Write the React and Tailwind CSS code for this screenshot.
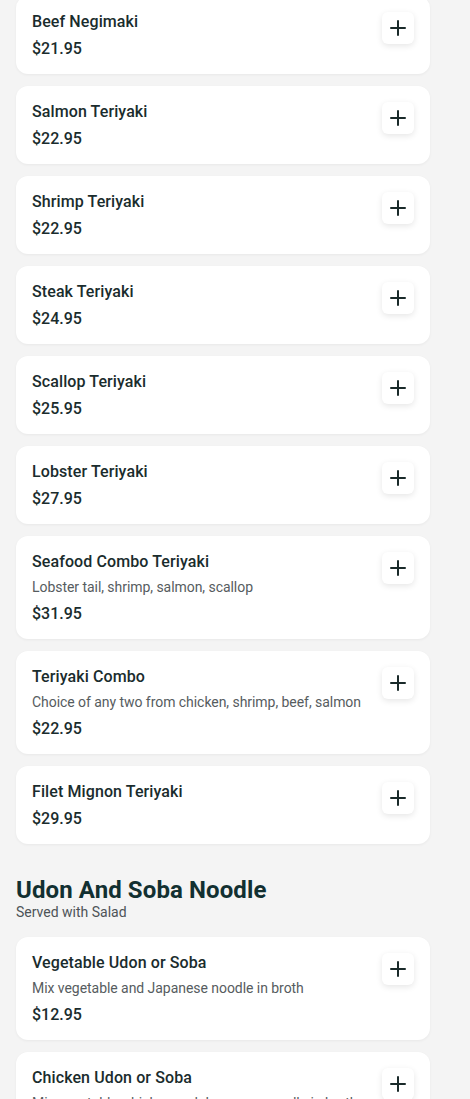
import React from "react";
import { Plus } from "lucide-react";

const teriyaki = [
  { name: "Beef Negimaki", price: "$21.95" },
  { name: "Salmon Teriyaki", price: "$22.95" },
  { name: "Shrimp Teriyaki", price: "$22.95" },
  { name: "Steak Teriyaki", price: "$24.95" },
  { name: "Scallop Teriyaki", price: "$25.95" },
  { name: "Lobster Teriyaki", price: "$27.95" },
  { name: "Seafood Combo Teriyaki", desc: "Lobster tail, shrimp, salmon, scallop", price: "$31.95" },
  { name: "Teriyaki Combo", desc: "Choice of any two from chicken, shrimp, beef, salmon", price: "$22.95" },
  { name: "Filet Mignon Teriyaki", price: "$29.95" },
];

const noodles = [
  { name: "Vegetable Udon or Soba", desc: "Mix vegetable and Japanese noodle in broth", price: "$12.95" },
  { name: "Chicken Udon or Soba", desc: "Mix vegetable, chicken and Japanese noodle in broth", price: "$13.95" },
];

function Item({ item }) {
  return (
    <div className="flex items-start justify-between rounded-xl bg-white p-4 shadow-[0_1px_3px_rgba(0,0,0,0.05)]">
      <div className="flex flex-col gap-2">
        <div className="text-base font-medium leading-[normal] tracking-[0.1px] text-[#1a2c2d]">{item.name}</div>
        {item.desc && (
          <div className="text-sm leading-[17px] tracking-[-0.05px] text-[#565c60]">{item.desc}</div>
        )}
        <div className="text-base font-medium leading-[normal] text-[#1a2c2d]">{item.price}</div>
      </div>
      <button className="flex h-8 w-8 shrink-0 items-center justify-center rounded-md bg-white shadow-[0_2px_6px_rgba(0,0,0,0.10)]">
        <Plus size={24} strokeWidth={2} className="text-[#1a2a2a]" />
      </button>
    </div>
  );
}

export default function App() {
  return (
    <div
      className="min-h-screen bg-[#f4f4f4] pl-4 pr-10"
      style={{ fontFamily: "Roboto, 'Noto Sans', sans-serif" }}
    >
      <div className="-mt-1 flex flex-col gap-3">
        {teriyaki.map((it) => (
          <Item key={it.name} item={it} />
        ))}
      </div>
      <div className="mt-8 mb-[17px]">
        <h2 className="text-2xl font-bold leading-[normal] tracking-[0.1px] text-[#123031]">Udon And Soba Noodle</h2>
        <p className="text-sm leading-[normal] text-[#4d5357]">Served with Salad</p>
      </div>
      <div className="flex flex-col gap-3 pb-8">
        {noodles.map((it) => (
          <Item key={it.name} item={it} />
        ))}
      </div>
    </div>
  );
}
